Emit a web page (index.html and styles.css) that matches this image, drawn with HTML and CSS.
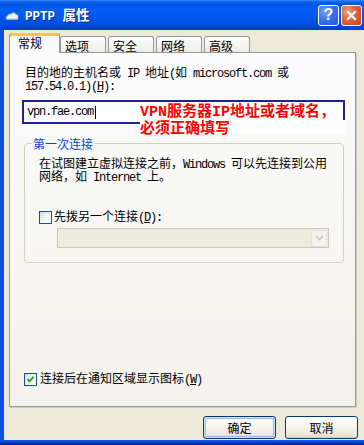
FILE: index.html
```html
<!DOCTYPE html>
<html>
<head>
<meta charset="utf-8">
<title>PPTP 属性</title>
<link rel="stylesheet" href="styles.css">
</head>
<body>
<div class="window">
  <div class="titlebar">
    <svg class="ticon" width="14" height="9" viewBox="0 0 14 9">
      <path d="M2.5 8.5 C0.5 8.5 0.5 5.2 2.6 5.2 C2.6 3.2 4.6 2.4 6 3.4 C6.8 1.2 10.2 1.2 10.8 3.6 C12.8 3.4 13.8 5.4 12.8 6.3 C13.9 7 13.2 8.5 12 8.5 Z" fill="#eef2f7" stroke="#9aa9bd" stroke-width="0.6"/>
      <path d="M2.5 7.8 L12 7.8" stroke="#b8c2cf" stroke-width="0.8"/>
    </svg>
    <div class="title"><span class="mb">PPTP </span>属性</div>
    <div class="tbtn help">?</div>
    <div class="tbtn close">
      <svg width="13" height="13" viewBox="0 0 13 13"><path d="M3 3 L10 10 M10 3 L3 10" stroke="#fff" stroke-width="2.2" stroke-linecap="square"/></svg>
    </div>
  </div>
  <div class="frame">
    <div class="client">
      <div class="tabs">
        <div class="tab active">常规</div>
        <div class="tab">选项</div>
        <div class="tab">安全</div>
        <div class="tab">网络</div>
        <div class="tab">高级</div>
      </div>
      <div class="panel">
        <div class="label">
          <div class="line">目的地的主机名或<span class="m"> IP </span>地址<span class="m">(</span>如<span class="m"> microsoft.com </span>或</div>
          <div class="line"><span class="m">157.54.0.1)(<u>H</u>):</span></div>
        </div>
        <div class="inputwrap">
          <div class="input"><span class="m">vpn.fae.com</span><span class="caret"></span></div>
          <div class="note">
            <div class="l1"><span class="mb2">VPN</span>服务器<span class="mb2">IP</span>地址或者域名，</div>
            <div class="l2">必须正确填写</div>
          </div>
        </div>
        <fieldset class="group">
          <legend>第一次连接</legend>
          <div class="desc">
            <div class="line">在试图建立虚拟连接之前，<span class="m">Windows </span>可以先连接到公用</div>
            <div class="line">网络，如<span class="m"> Internet </span>上。</div>
          </div>
          <div class="chkrow inner">
            <span class="box"></span>
            <span class="chklabel">先拨另一个连接<span class="m">(<u>D</u>):</span></span>
          </div>
          <div class="combo">
            <span class="arrow">
              <svg width="9" height="6" viewBox="0 0 9 6"><path d="M1 1 L4.5 4.5 L8 1" fill="none" stroke="#c6c5bd" stroke-width="1.6"/></svg>
            </span>
          </div>
        </fieldset>
        <div class="chkrow bottom">
          <span class="box checked">
            <svg width="11" height="11" viewBox="0 0 11 11"><path d="M2.5 5 L4.5 7.3 L8.6 2.8" fill="none" stroke="#21a121" stroke-width="1.8"/></svg>
          </span>
          <span class="chklabel">连接后在通知区域显示图标<span class="m">(<u>W</u>)</span></span>
        </div>
      </div>
      <div class="buttons">
        <div class="btn default">确定</div>
        <div class="btn">取消</div>
      </div>
    </div>
  </div>
  <div class="bottomframe"></div>
</div>
</body>
</html>
```
FILE: styles.css
```css
* { box-sizing: border-box; }
html, body { margin: 0; padding: 0; }
body {
  width: 364px;
  height: 445px;
  overflow: hidden;
  background: #ece9d8;
  font-family: "Noto Sans CJK SC", "Liberation Sans", sans-serif;
  font-size: 12px;
  color: #000;
}
.m {
  font-family: "Liberation Mono", "Noto Sans CJK SC", monospace;
  letter-spacing: -1.2px;
}
.window {
  width: 364px;
  height: 445px;
  display: flex;
  flex-direction: column;
}
.titlebar {
  height: 30px;
  flex: none;
  display: flex;
  align-items: center;
  padding: 0 2px 0 5px;
  background: linear-gradient(to bottom, #3a8cff 0, #0a5fe8 2px, #0054e3 5px, #0060f5 9px, #0058ee 16px, #004fe2 24px, #0043cf 28px, #003cc5 30px);
  color: #fff;
}
.ticon { display: block; margin-top: 1px; }
.title {
  margin-left: 6px;
  font-weight: bold;
  font-size: 13.5px;
  line-height: 16px;
  text-shadow: 1px 1px 0 #0c2a8c;
  margin-top: 1px;
}
.mb {
  font-family: "Liberation Mono", monospace;
  font-weight: bold;
  font-size: 12.5px;
}
.tbtn {
  width: 21px;
  height: 21px;
  border: 1px solid #fff;
  border-radius: 3px;
  display: flex;
  align-items: center;
  justify-content: center;
}
.help {
  margin-left: auto;
  background: radial-gradient(circle at 30% 30%, #6d9ff8 0, #3a72ee 45%, #2456d8 100%);
  font-family: "Liberation Sans", sans-serif;
  font-weight: bold;
  font-size: 16px;
  color: #fff;
  line-height: 1;
}
.close {
  margin-left: 2px;
  background: radial-gradient(circle at 30% 30%, #f39d7e 0, #e2603a 45%, #cc4219 100%);
}
.frame {
  flex: 1;
  display: flex;
  border-left: 4px solid #0a4fe0;
}
.client {
  flex: 1;
  display: flex;
  flex-direction: column;
  padding: 3px 0 0 5px;
}
.bottomframe {
  height: 5px;
  flex: none;
  background: linear-gradient(to bottom, #1060ee 0, #0842d4 2px, #04279e 4px, #001a80 5px);
}

/* tabs */
.tabs {
  height: 20px;
  display: flex;
  align-items: flex-end;
  margin-bottom: -1px;
  position: relative;
  z-index: 1;
}
.tab {
  width: 46px;
  height: 16px;
  margin-bottom: 1px;
  margin-left: 2px;
  padding: 2px 0 0 4px;
  line-height: 13px;
  border: 1px solid #919b9c;
  border-bottom: none;
  border-radius: 3px 3px 0 0;
  background: linear-gradient(to bottom, #fefefe 0, #f4f3ee 60%, #ebeae3 100%);
}
.tab.active + .tab { margin-left: 0; }
.tab.active {
  width: 51px;
  height: 20px;
  margin-bottom: 0;
  margin-left: 0;
  padding: 3px 0 0 8px;
  background: #fcfcfe;
  border-top: 0;
  box-shadow: inset 0 3px 0 #ffc73c, inset 0 1px 0 #e68b2c;
  border-radius: 3px 3px 0 0;
}

/* panel */
.panel {
  width: 347px;
  height: 355px;
  border: 1px solid #919b9c;
  box-shadow: 1px 1px 0 #d2d0c6;
  background: linear-gradient(to bottom, #fcfcfe 0, #f7f6f2 55%, #f3f2ec 100%);
  display: flex;
  flex-direction: column;
  padding: 0 10px 20px 12px;
}
.line { height: 13px; line-height: 13px; white-space: nowrap; }
.label { margin: 12px 0 0 3px; }
.inputwrap {
  position: relative;
  margin-top: 9px;
  height: 24px;
}
.input {
  height: 24px;
  border: 2px solid #1e2096;
  background: #fff;
  display: flex;
  align-items: center;
  padding-left: 3px;
  line-height: 13px;
}
.caret {
  display: inline-block;
  width: 1px;
  height: 13px;
  background: #000;
  margin-left: 2px;
}
.note {
  position: absolute;
  left: 118px;
  top: 3px;
  color: #ff0000;
  font-weight: bold;
  font-size: 15px;
  line-height: 14px;
}
.mb2 {
  font-family: "Liberation Mono", monospace;
  font-weight: bold;
  font-size: 15px;
}
.l1 { white-space: nowrap; }
.l2 {
  width: 205px;
  background: #fff;
  white-space: nowrap;
  height: 14px;
}

/* group */
.group {
  margin: 13px 1px 0 2px;
  padding: 6px 13px 14px 14px;
  border: 1px solid #d0d0bf;
  border-radius: 4px;
  min-width: 0;
}
.group legend {
  margin-left: -7px;
  padding: 0 1px;
  color: #0046d5;
  line-height: 13px;
}
.chkrow {
  display: flex;
  align-items: center;
  height: 14px;
  line-height: 13px;
}
.chkrow.inner { margin-top: 28px; gap: 2px; }
.box {
  width: 13px;
  height: 13px;
  border: 1px solid #1c5180;
  background: linear-gradient(135deg, #dcdcd7 0, #f6f6f3 60%, #ffffff 100%);
  display: flex;
  align-items: center;
  justify-content: center;
  flex: none;
}
.box svg { display: block; }
.combo {
  margin: 4px 0 0 18px;
  width: 272px;
  height: 20px;
  border: 1px solid #c9c7ba;
  background: #edecdf;
  display: flex;
  justify-content: flex-end;
  align-items: center;
  padding-right: 1px;
}
.arrow {
  width: 16px;
  height: 17px;
  border-radius: 2px;
  background: #f4f3ee;
  border: 1px solid #e4e2d8;
  display: flex;
  align-items: center;
  justify-content: center;
}
.chkrow.bottom { margin-top: auto; margin-left: 2px; gap: 3px; }

/* buttons */
.buttons {
  display: flex;
  justify-content: flex-end;
  gap: 9px;
  margin-top: 9px;
  padding-right: 6px;
}
.btn {
  width: 73px;
  height: 23px;
  border: 1px solid #003c74;
  border-radius: 3px;
  background: linear-gradient(to bottom, #ffffff 0, #f5f4ef 50%, #e9e7de 85%, #d6d0c5 100%);
  display: flex;
  align-items: center;
  justify-content: center;
  line-height: 13px;
}
.btn.default {
  box-shadow: inset 0 0 0 1px #cee7ff, inset 0 0 0 2px #98b8ea;
}
```
